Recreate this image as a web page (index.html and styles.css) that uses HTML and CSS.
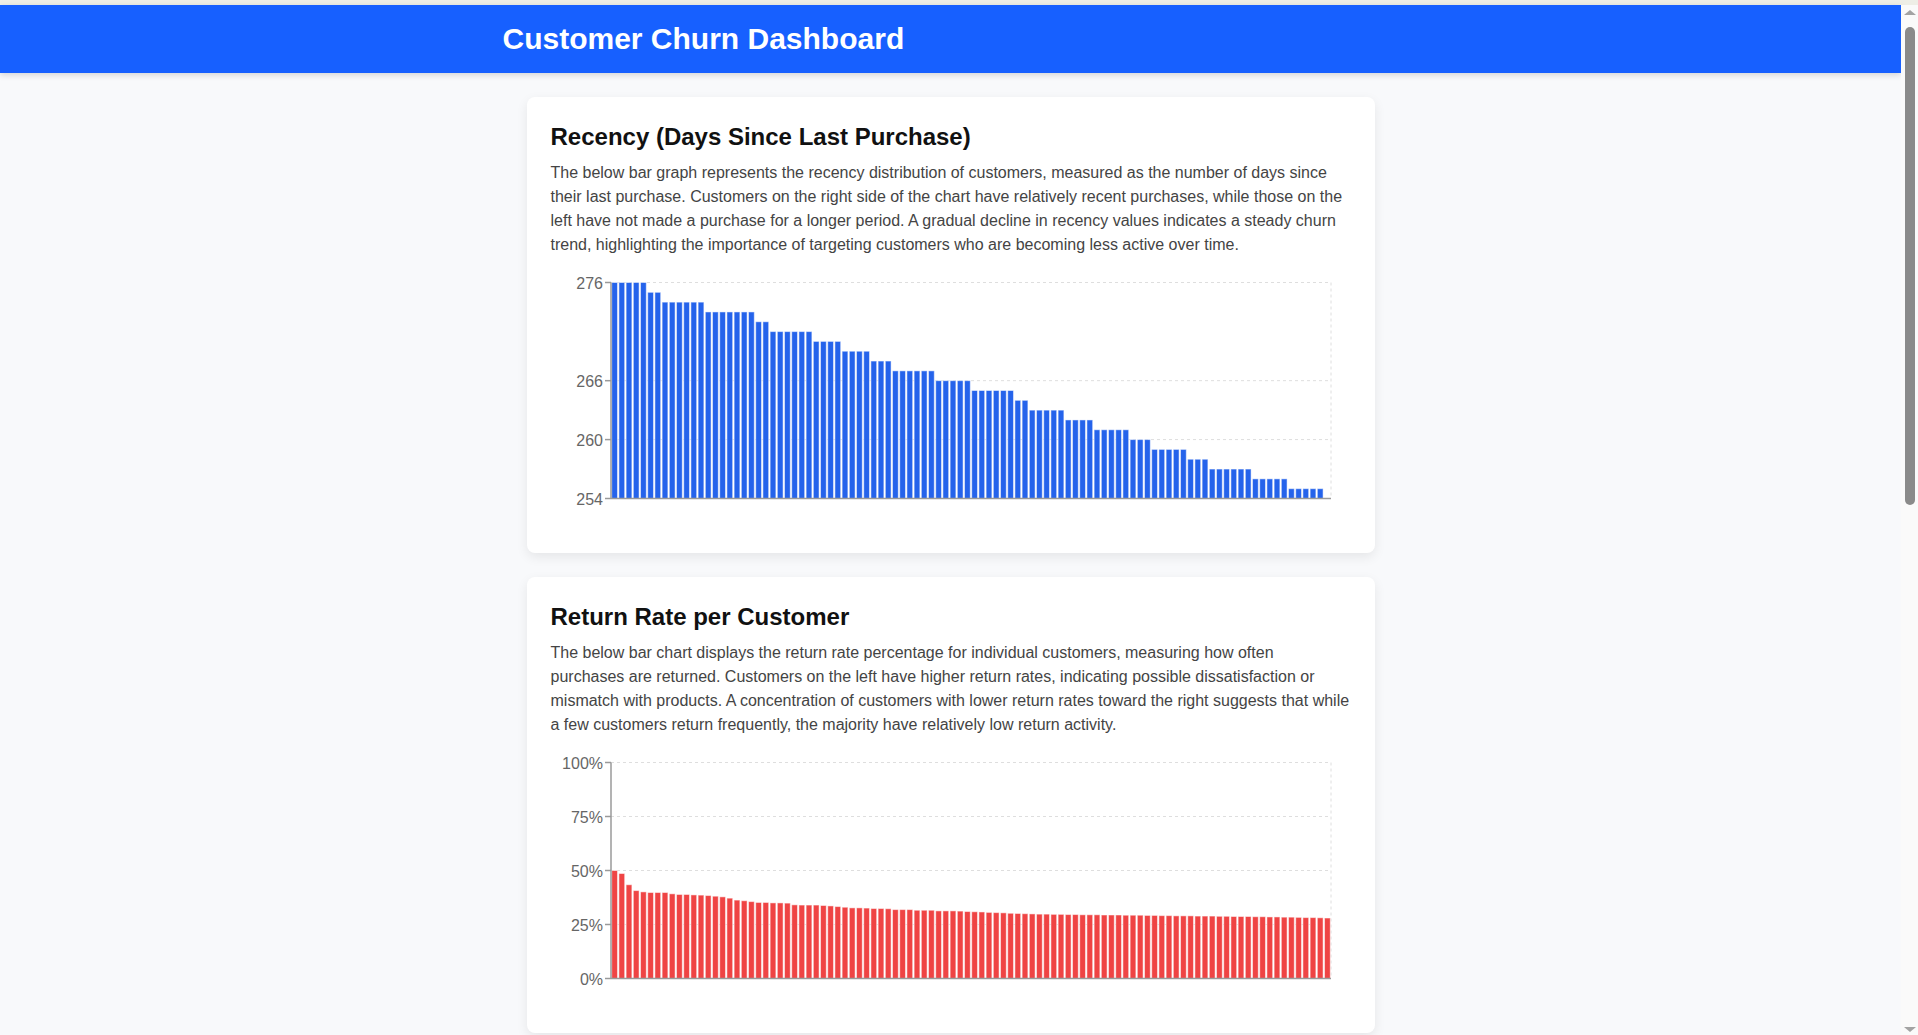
FILE: index.html
```html
<!DOCTYPE html>
<html lang="en">
<head>
<meta charset="utf-8">
<title>Customer Churn Dashboard</title>
<link rel="stylesheet" href="styles.css">
</head>
<body>
<div class="topstrip"></div>
<header class="app-header">
  <div class="header-inner">
    <h1 class="app-title">Customer Churn Dashboard</h1>
  </div>
</header>
<main class="dashboard">
  <section class="card">
    <h2 class="card-title">Recency (Days Since Last Purchase)</h2>
    <p class="card-text">The below bar graph represents the recency distribution of customers, measured as the number of days since their last purchase. Customers on the right side of the chart have relatively recent purchases, while those on the left have not made a purchase for a longer period. A gradual decline in recency values indicates a steady churn trend, highlighting the importance of targeting customers who are becoming less active over time.</p>
    <svg class="chart" id="recency-chart" width="800" height="258" viewBox="0 0 800 258"></svg>
  </section>
  <section class="card">
    <h2 class="card-title">Return Rate per Customer</h2>
    <p class="card-text">The below bar chart displays the return rate percentage for individual customers, measuring how often purchases are returned. Customers on the left have higher return rates, indicating possible dissatisfaction or mismatch with products. A concentration of customers with lower return rates toward the right suggests that while a few customers return frequently, the majority have relatively low return activity.</p>
    <svg class="chart" id="return-chart" width="800" height="258" viewBox="0 0 800 258"></svg>
  </section>
</main>
<div class="scrollbar" aria-hidden="true">
  <div class="scroll-arrow scroll-up"></div>
  <div class="scroll-thumb"></div>
  <div class="scroll-arrow scroll-down"></div>
</div>
<script src="script.js"></script>
</body>
</html>
```
FILE: styles.css
```css
html, body {
  margin: 0;
  padding: 0;
}
body {
  background: #f8f9fb;
  font-family: "Liberation Sans", Arial, sans-serif;
  padding-right: 17px;
}
.topstrip {
  height: 5px;
  background: #eeeee6;
  margin-right: -17px;
}
.app-header {
  background: #1760ff;
  height: 68px;
  box-sizing: border-box;
  padding: 16px 0 16px;
  box-shadow: 0 2px 6px rgba(0, 0, 0, 0.15);
}
.header-inner {
  max-width: 896px;
  margin: 0 auto;
}
.app-title {
  margin: 0;
  font-size: 30px;
  line-height: 36px;
  font-weight: 700;
  color: #ffffff;
}
.dashboard {
  box-sizing: border-box;
  width: 848px;
  margin: 0 auto;
  padding: 24px 0;
  min-height: 2092px;
  display: flex;
  flex-direction: column;
  gap: 24px;
}
.card {
  background: #ffffff;
  border-radius: 8px;
  box-shadow: 0 4px 12px rgba(0, 0, 0, 0.08);
  padding: 26px 24px 24px;
}
.card-title {
  margin: 0 0 10px;
  font-size: 24px;
  line-height: 28px;
  font-weight: 700;
  color: #111111;
}
.card-text {
  margin: 0 0 14px;
  font-size: 16px;
  line-height: 24px;
  color: #444444;
}
.chart {
  display: block;
  width: 800px;
  height: 258px;
}
.chart .grid {
  stroke: #dedede;
  stroke-width: 1;
  stroke-dasharray: 3 3;
  fill: none;
}
.chart .axis {
  stroke: #9a9a9a;
  stroke-width: 1.5;
  fill: none;
}
.chart .tick-label {
  font-family: "Liberation Sans", Arial, sans-serif;
  font-size: 16px;
  fill: #666666;
}
.chart .bar {
  stroke: rgba(255, 255, 255, 0.5);
  stroke-width: 1;
}
.chart .bar-blue {
  fill: #2563eb;
}
.chart .bar-red {
  fill: #ef4444;
}

/* window scrollbar overlay */
.scrollbar {
  position: fixed;
  top: 5px;
  right: 0;
  bottom: 0;
  width: 17px;
  background: #fafafa;
  display: flex;
  flex-direction: column;
  align-items: center;
}
.scroll-arrow {
  width: 0;
  height: 0;
  border-left: 6px solid transparent;
  border-right: 6px solid transparent;
}
.scroll-up {
  margin-top: 5px;
  border-bottom: 5px solid #a3a3a3;
}
.scroll-down {
  margin-top: auto;
  margin-bottom: 3px;
  border-top: 5px solid #a3a3a3;
}
.scroll-thumb {
  margin-top: 12px;
  width: 10px;
  height: 478px;
  border-radius: 5px;
  background: #8a8a8a;
}
```
FILE: script.js
```js
(function () {
  var NS = 'http://www.w3.org/2000/svg';

  function el(name, attrs, text) {
    var node = document.createElementNS(NS, name);
    for (var k in attrs) {
      node.setAttribute(k, attrs[k]);
    }
    if (text !== undefined) node.textContent = text;
    return node;
  }

  function repeat(list) {
    var out = [];
    for (var i = 0; i < list.length; i++) {
      for (var j = 0; j < list[i][1]; j++) out.push(list[i][0]);
    }
    return out;
  }

  function drawChart(svg, data, opts) {
    var x0 = 60, x1 = 780, y0 = 11.5, y1 = 227.5;
    var n = data.length;
    var band = (x1 - x0) / n;
    var gap = band * 0.1;
    var bw = band - gap * 2;

    function yOf(v) {
      return y1 - (v - opts.min) / (opts.max - opts.min) * (y1 - y0);
    }

    var g = el('g', {});
    opts.ticks.forEach(function (t) {
      if (t === opts.min) return;
      var y = yOf(t);
      g.appendChild(el('line', { 'class': 'grid', x1: x0, x2: x1, y1: y, y2: y }));
    });
    g.appendChild(el('line', { 'class': 'grid', x1: x1, x2: x1, y1: y0, y2: y1 }));
    svg.appendChild(g);

    var bars = el('g', {});
    data.forEach(function (v, i) {
      var top = yOf(v);
      var h = y1 - top;
      if (h <= 0) return;
      bars.appendChild(el('rect', {
        'class': 'bar ' + opts.barClass,
        x: (x0 + i * band + gap).toFixed(2),
        y: top.toFixed(2),
        width: bw.toFixed(2),
        height: h.toFixed(2)
      }));
    });
    svg.appendChild(bars);

    var axes = el('g', {});
    axes.appendChild(el('line', { 'class': 'axis', x1: x0, x2: x0, y1: y0, y2: y1 }));
    axes.appendChild(el('line', { 'class': 'axis', x1: x0, x2: x1, y1: y1, y2: y1 }));
    opts.ticks.forEach(function (t) {
      var y = yOf(t);
      axes.appendChild(el('line', { 'class': 'axis', x1: x0 - 6, x2: x0, y1: y, y2: y }));
      axes.appendChild(el('text', {
        'class': 'tick-label',
        x: x0 - 8,
        y: (y + 6.5).toFixed(2),
        'text-anchor': 'end'
      }, opts.format(t)));
    });
    svg.appendChild(axes);
  }

  var recency = repeat([
    [276, 5], [275, 2], [274, 6], [273, 7], [272, 2], [271, 6], [270, 4],
    [269, 4], [268, 3], [267, 6], [266, 5], [265, 6], [264, 2], [263, 5],
    [262, 4], [261, 5], [260, 3], [259, 5], [258, 3], [257, 6], [256, 5],
    [255, 5], [254, 1]
  ]);

  var returns = [
    50, 48.6, 43.4, 40.7, 40.1, 39.8, 39.8, 39.8, 39.2, 38.9,
    38.9, 38.7, 38.6, 38.4, 38.1, 37.8, 37.2, 36.3, 36.0, 35.6,
    35.2, 35.2, 35.0, 35.0, 34.9, 34.1, 34.0, 34.0, 34.0, 33.8,
    33.6, 33.3, 33.0, 32.7, 32.7, 32.6, 32.4, 32.4, 32.3, 31.9,
    31.9, 31.9, 31.6, 31.6, 31.6, 31.3,
    31.3, 31.3, 31.2, 31.0, 30.9, 30.8, 30.6, 30.5, 30.4, 30.2,
    30.1, 30.0, 29.9, 29.8, 29.8, 29.7, 29.7, 29.6, 29.6, 29.5,
    29.5, 29.5, 29.4, 29.4, 29.4, 29.3, 29.3, 29.3, 29.2, 29.2,
    29.1, 29.1, 29.0, 29.0, 29.0, 28.9, 28.9, 28.9, 28.8, 28.8,
    28.7, 28.7, 28.7, 28.6, 28.6, 28.5, 28.5, 28.4, 28.4, 28.3,
    28.2, 28.2, 28.1, 28.0
  ];

  drawChart(document.getElementById('recency-chart'), recency, {
    min: 254, max: 276, ticks: [254, 260, 266, 276],
    format: function (t) { return String(t); },
    barClass: 'bar-blue'
  });

  drawChart(document.getElementById('return-chart'), returns, {
    min: 0, max: 100, ticks: [0, 25, 50, 75, 100],
    format: function (t) { return t + '%'; },
    barClass: 'bar-red'
  });
})();
```
